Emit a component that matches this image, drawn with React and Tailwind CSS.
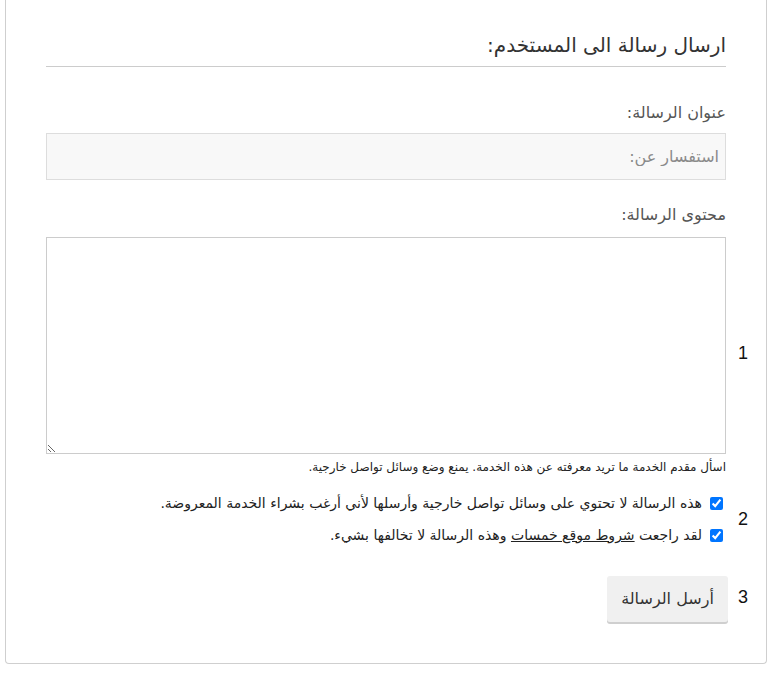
import React from "react";

const ar = { fontFamily: '"DejaVu Sans", "Noto Sans", sans-serif' };

function Num({ n, className = "" }) {
  return (
    <div
      className={"w-[40px] pl-[12px] text-[18px] leading-none text-[#111] " + className}
      style={{ fontFamily: '"Liberation Sans", Arial, sans-serif' }}
    >
      {n}
    </div>
  );
}

export default function App() {
  return (
    <div className="w-[776px] h-[676px] bg-white">
      <div className="ml-[5px] w-[762px] h-[664px] border-x border-b border-[#cfcfcf] rounded-b-[4px] pl-[40px] pt-[31px]">
        <div className="w-[680px]" dir="rtl" style={ar}>
          <h2 className="h-[28px] text-[20px] leading-[28px] text-[#333] font-normal">
            ارسال رسالة الى المستخدم:
          </h2>
          <div className="mt-[7px] border-t border-[#cccccc]" />
          <div className="mt-[34px] h-[24px] text-[16px] leading-[24px] text-[#555]">
            عنوان الرسالة:
          </div>
          <input
            className="mt-[8px] block w-full h-[47px] bg-[#f8f8f8] border border-[#dddddd] px-[6px] text-[16px] text-[#333] placeholder:text-[#8a8a8a] outline-none"
            placeholder="استفسار عن:"
            style={ar}
          />
          <div className="mt-[23px] h-[24px] text-[16px] leading-[24px] text-[#555]">
            محتوى الرسالة:
          </div>
        </div>
        <div className="flex items-center">
          <textarea
            dir="rtl"
            className="mt-[10px] block w-[680px] h-[217px] bg-white border border-[#cccccc] outline-none resize-y"
            style={ar}
          />
          <Num n="1" className="mt-[24px]" />
        </div>
        <div className="w-[680px]" dir="rtl" style={ar}>
          <div className="mt-[5px] h-[16px] text-[12px] leading-[16px] text-[#222]">
            اسأل مقدم الخدمة ما تريد معرفته عن هذه الخدمة. يمنع وضع وسائل تواصل خارجية.
          </div>
        </div>
        <div className="flex items-center mt-[18px]">
          <div className="w-[680px] flex flex-col gap-[12px]" dir="rtl" style={ar}>
            <label className="flex items-center h-[20px] text-[14px] leading-[20px] text-[#222]">
              <input type="checkbox" defaultChecked className="w-[13px] h-[13px] ml-[8px] mr-[3px]" />
              هذه الرسالة لا تحتوي على وسائل تواصل خارجية وأرسلها لأني أرغب بشراء الخدمة المعروضة.
            </label>
            <label className="flex items-center h-[20px] text-[14px] leading-[20px] text-[#222]">
              <input type="checkbox" defaultChecked className="w-[13px] h-[13px] ml-[8px] mr-[3px]" />
              <span>
                لقد راجعت <span className="underline">شروط موقع خمسات</span> وهذه الرسالة لا تخالفها بشيء.
              </span>
            </label>
          </div>
          <Num n="2" />
        </div>
        <div className="flex items-center mt-[31px]">
          <div className="w-[680px] flex" dir="rtl" style={ar}>
            <button className="mr-[-2px] w-[121px] h-[46px] bg-[#f0f0f0] rounded-[3px] shadow-[0_2px_0_#cfcfcf] text-[16px] text-[#333]">
              أرسل الرسالة
            </button>
          </div>
          <Num n="3" className="mb-[4px]" />
        </div>
      </div>
    </div>
  );
}
